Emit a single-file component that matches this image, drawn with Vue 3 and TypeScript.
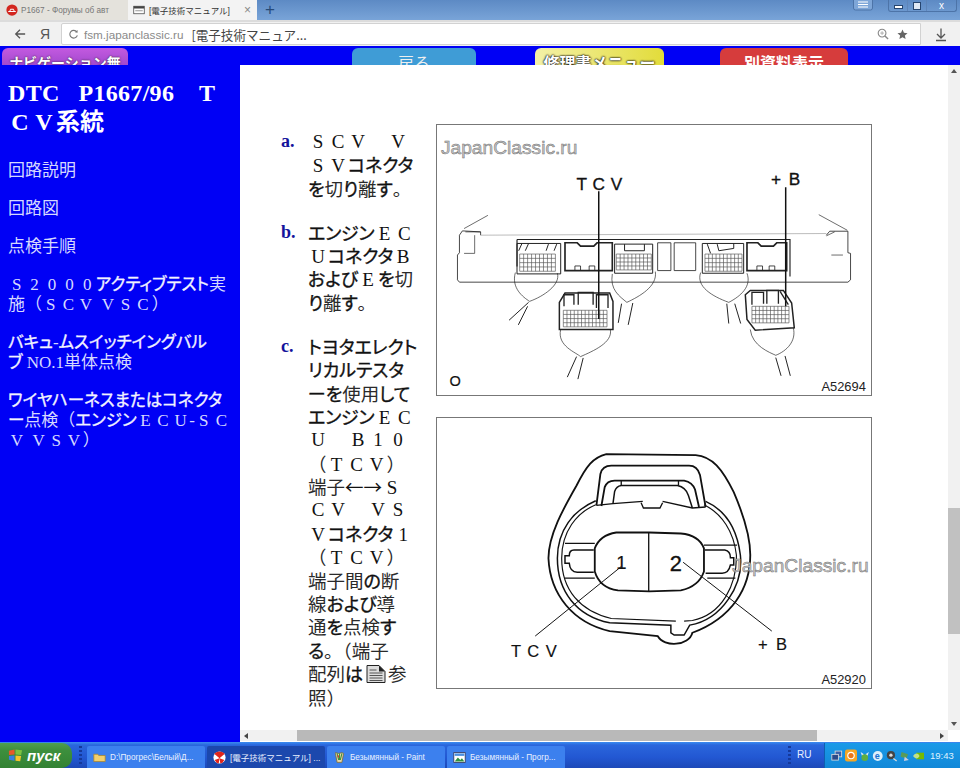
<script setup lang="ts">
// Разбивка строки на куски: полноширинная латиница рисуется засечками в ячейке, кана жирнее кандзи
type Seg = { t: string; c: string };

function segs(line: string): Seg[] {
  const out: Seg[] = [];
  for (const ch of line) {
    const code = ch.charCodeAt(0);
    if (code >= 0xff10 && code <= 0xff5a) {
      out.push({ t: String.fromCharCode(code - 0xfee0), c: "fw" });
    } else if (ch === "\u3000") {
      out.push({ t: ch, c: "fw" });
    } else {
      let c = "kanji";
      if (/[\u3040-\u30ff]/.test(ch)) c = "kana";
      else if (/[\x20-\x7e]/.test(ch)) c = "asc";
      else if (/[←→]/.test(ch)) c = "arrow";
      const last = out[out.length - 1];
      if (last && last.c === c) last.t += ch;
      else out.push({ t: ch, c });
    }
  }
  return out;
}

const title = ["DTC   P1667/96    T", "ＣＶ系統"];

const navItems: string[][] = [
  ["回路説明"],
  ["回路図"],
  ["点検手順"],
  ["Ｓ２０００アクティブテスト実", "施（ＳＣＶ ＶＳＣ）"],
  ["バキュ-ムスイッチイングバル", "ブ NO.1単体点検"],
  ["ワイヤハーネスまたはコネクタ", "ー点検（エンジンＥＣＵ-ＳＣ", "Ｖ ＶＳＶ）"],
];

const steps = [
  { mark: "a.", lines: ["ＳＣＶ　Ｖ", "ＳＶコネクタ", "を切り離す。"] },
  { mark: "b.", lines: ["エンジンＥＣ", "ＵコネクタＢ", "およびＥを切", "り離す。"] },
  {
    mark: "c.",
    lines: [
      "トヨタエレクト",
      "リカルテスタ",
      "ーを使用して",
      "エンジンＥＣ",
      "Ｕ　Ｂ１０",
      "（ＴＣＶ）",
      "端子←→Ｓ",
      "ＣＶ　ＶＳ",
      "Ｖコネクタ１",
      "（ＴＣＶ）",
      "端子間の断",
      "線および導",
      "通を点検す",
      "る。（端子",
      "配列は@参",
      "照）",
    ],
  },
];

const buttons = [
  { label: "ナビゲーション無", cls: "b-purple" },
  { label: "戻る", cls: "b-blue" },
  { label: "修理書メニュー", cls: "b-yellow" },
  { label: "別資料表示", cls: "b-red" },
];

const tasks = [
  { label: "D:\\Прогрес\\Белый\\Д...", icon: "folder", active: false },
  { label: "[電子技術マニュアル] ...", icon: "yandex", active: true },
  { label: "Безымянный - Paint", icon: "paint", active: false },
  { label: "Безымянный - Прогр...", icon: "pic", active: false },
];

// сетка контактов разъёма на схеме
function grid(x: number, y: number, w: number, h: number, cols: number, rows: number): string {
  let d = "";
  for (let i = 0; i <= cols; i++) d += `M${x + (w * i) / cols},${y}V${y + h}`;
  for (let j = 0; j <= rows; j++) d += `M${x},${y + (h * j) / rows}H${x + w}`;
  return d;
}

const grids = [
  grid(248, 402, 108, 52, 9, 4),
  grid(540, 402, 106, 48, 9, 4),
  grid(808, 402, 112, 52, 10, 4),
  grid(380, 572, 132, 50, 12, 4),
  grid(950, 560, 112, 50, 10, 4),
];
</script>

<template>
  <div class="screen">
    <header class="tabs">
      <div class="tab tab-back">
        <svg class="fav" viewBox="0 0 16 16"><circle cx="8" cy="8" r="7.5" fill="#d3261c" /><path d="M3 10h10M5 10l1-3h4l1 3" stroke="#fff" stroke-width="1.3" fill="none" /></svg>
        <span class="tab-text fade">P1667 - Форумы об авт</span>
      </div>
      <div class="tab tab-on">
        <svg class="fav" viewBox="0 0 16 16"><rect x="1" y="3" width="14" height="10" fill="#fff" stroke="#444" /><rect x="1" y="3" width="14" height="3" fill="#444" /><path d="M3 9h10" stroke="#777" /></svg>
        <span class="tab-text">[電子技術マニュアル]</span>
        <span class="tab-x">×</span>
      </div>
      <span class="plus">+</span>
      <div class="win">
        <svg class="win-menu" viewBox="0 0 20 11"><rect x=".5" y="-3" width="19" height="13" rx="2" fill="#7ea6d8" stroke="#4d74a8" /><path d="M5 2h10M5 4.5h10M5 7h10" stroke="#fff" stroke-width="1.2" /></svg>
        <div class="win-btns">
          <span class="wb"><i class="w-min"></i></span>
          <span class="wb"><i class="w-max"></i></span>
          <span class="wb wb-x">x</span>
        </div>
      </div>
    </header>

    <div class="toolbar">
      <svg class="tb-back" viewBox="0 0 14 14"><path d="M13 7H2M7 2L2 7l5 5" fill="none" stroke="#555" stroke-width="1.5" /></svg>
      <span class="ya">Я</span>
      <div class="omni">
        <svg class="reload" viewBox="0 0 12 12"><path d="M9.6 3.2A4.2 4.2 0 1 0 10.2 7" fill="none" stroke="#777" stroke-width="1.2" /><path d="M7.6 3.6L10.4 4V1.2z" fill="#777" /></svg>
        <span class="host">fsm.japanclassic.ru</span>
        <span class="omni-title">[電子技術マニュア...</span>
        <svg class="zoom-ic" viewBox="0 0 13 13"><circle cx="5.5" cy="5.5" r="4.2" fill="none" stroke="#888" stroke-width="1.2" /><path d="M8.6 8.6L12 12" stroke="#888" stroke-width="1.5" /><path d="M3.5 5.5h4M5.5 3.5v4" stroke="#aaa" /></svg>
        <svg class="star" viewBox="0 0 12 12"><path d="M6 .5l1.6 3.6 3.9.4-2.9 2.6.8 3.9L6 9l-3.4 2 .8-3.9L.5 4.5l3.9-.4z" fill="#666" /></svg>
      </div>
      <svg class="dl" viewBox="0 0 12 14"><path d="M6 1v9M2 6.5l4 4 4-4M1 13h10" fill="none" stroke="#555" stroke-width="1.3" /></svg>
    </div>

    <div class="page-head">
      <span v-for="b in buttons" :key="b.label" class="pbtn" :class="b.cls">{{ b.label }}</span>
    </div>

    <div class="page">
      <aside class="side">
        <h1 class="side-title">
          <div v-for="(l, i) in title" :key="i" class="line">
            <span v-for="(s, j) in segs(l)" :key="j" :class="s.c">{{ s.t }}</span>
          </div>
        </h1>
        <div v-for="(item, i) in navItems" :key="i" class="nav-item">
          <div v-for="(l, k) in item" :key="k" class="line">
            <span v-for="(s, j) in segs(l)" :key="j" :class="s.c">{{ s.t }}</span>
          </div>
        </div>
      </aside>

      <div class="pane">
        <main class="doc">
          <ol class="steps">
            <li v-for="st in steps" :key="st.mark" class="step">
              <span class="mark">{{ st.mark }}</span>
              <div class="step-text">
                <div v-for="(l, k) in st.lines" :key="k" class="line">
                  <template v-for="(s, j) in segs(l)" :key="j">
                    <template v-if="s.t.includes('@')">
                      <svg class="doc-ic" viewBox="0 0 20 18"><path d="M1 .5h12l6 6v11H1z" fill="#ddd" stroke="#222" /><path d="M13 .5v6h6z" fill="#222" /><path d="M3.5 5h7M3.5 8h13M3.5 10.5h13M3.5 13h13M3.5 15.5h13" stroke="#555" /></svg>
                      <span class="kanji">{{ s.t.replace("@", "") }}</span>
                    </template>
                    <span v-else :class="s.c">{{ s.t }}</span>
                  </template>
                </div>
              </div>
            </li>
          </ol>

          <div class="figures">
            <svg class="fig" viewBox="0 12 1308 816">
              <g fill="none" stroke="#222" stroke-width="2.5">
                <path d="M80,325L152,285M1152,283L1238,330" stroke-width="2" />
                <path d="M130,345L130,335L75,332L66,345V398L60,405V480L66,487H1240L1248,480V400L1240,398V333H1185L1175,345" />
                <path d="M130,345L1175,340" stroke="#999" stroke-width="2" />
                <path d="M84,335H130M1175,347L1200,335M80,400H112V345M1190,405H1225" stroke-width="2" />
                <path d="M240,358H1065V470M240,358V440" stroke-width="3.5" />
                <path d="M385,368H422L432,378H472L482,368H528V452H385Z" stroke-width="5" />
                <path d="M415,452V438H432V452M458,452V438H475V452" />
                <path d="M935,368H968L978,378H1015L1025,368H1055V452H935Z" stroke-width="5" />
                <path d="M965,452V438H982V452M1002,452V438H1019V452" />
                <path d="M665,368V452H705V368ZM715,368V452H780V368Z" stroke-width="2.5" />
                <path d="M240,370H372V462H240ZM535,372H650V460H535ZM800,370H925V460H800Z" stroke-width="3" />
                <path d="M255,370L245,392M275,370L265,392M335,372L328,392M360,372L352,392M565,372V392H625V372M815,372L825,400M845,372L850,392L895,385V370" stroke-width="3" />
                <path d="M235,458C222,505 258,532 278,545C320,530 372,495 362,460" stroke-width="2" />
                <path d="M528,462C520,510 550,530 572,548C610,530 665,500 658,455" stroke-width="2" />
                <path d="M795,458C780,500 830,530 880,548C915,530 950,500 935,460" stroke-width="2" />
                <path d="M275,548L216,602M272,560L244,616M556,552L546,610M590,550L576,616M874,552L880,612M898,552L916,612" stroke-width="3" />
                <path d="M368,548L385,520H520L530,545V630H368Z" stroke-width="4.5" />
                <path d="M382,560V525H412V555M425,555V518H470V555M480,565V525H515V565" stroke-width="4" />
                <path d="M372,630C360,680 420,700 432,712C470,695 530,670 522,630" stroke-width="2" />
                <path d="M420,712L392,774M440,716L424,780" stroke-width="3" />
                <path d="M930,525L945,512H1045L1070,550L1078,625L960,632L935,600Z" stroke-width="4.5" />
                <path d="M950,555V518H985V552M995,552V512H1030V552M1035,515L1060,555" stroke-width="4" />
                <path d="M945,630C950,680 1005,700 1022,708C1055,695 1085,665 1075,625" stroke-width="2" />
                <path d="M1022,715L1038,770M1050,710L1066,770" stroke-width="3" />
                <path v-for="(g, i) in grids" :key="i" :d="g" stroke="#555" stroke-width="2" />
              </g>
              <path d="M487,212V598M1052,200V560" stroke="#111" stroke-width="4.5" fill="none" />
              <text class="cap big" x="420" y="208" textLength="138">T C V</text>
              <text class="cap big" x="1008" y="193" textLength="88">+ B</text>
              <text class="cap letter" x="36" y="800">O</text>
              <text class="code" x="1160" y="816">A52694</text>
              <text class="mark-w" x="10" y="100">JapanClassic.ru</text>
            </svg>

            <svg class="fig" viewBox="0 6 1308 816">
              <g fill="none" stroke="#111" stroke-width="5.5">
                <path d="M510,115L780,118C830,122 860,160 895,230C925,300 945,360 945,420C945,520 890,610 770,655C760,695 685,700 665,665L520,650C410,625 340,540 335,430C335,360 380,280 420,210C450,150 470,125 510,115Z" />
                <path d="M478,256C410,285 362,345 362,430C362,530 420,605 520,625L705,632V655L715,662H745L762,632C860,615 925,510 915,420C905,340 870,285 810,258" stroke-width="4.5" />
                <path d="M478,268C420,292 375,350 375,430C375,525 430,590 525,612L720,620M745,620L770,618C860,600 905,510 903,420C895,350 860,295 805,268" stroke-width="3.5" />
                <path d="M480,270L492,175Q498,150 525,150H760Q785,150 793,178L810,275" />
                <path d="M495,272L505,215Q512,195 535,195H745Q770,200 778,222L790,275" />
                <path d="M530,265L535,228Q540,212 555,210H725Q750,215 758,240L770,278" stroke-width="4.5" />
                <path d="M480,270L530,265L620,258M680,258L770,278L810,275M555,195V210M728,195V210" stroke-width="4" />
                <path d="M615,262L622,278H672L680,262" stroke-width="4" />
                <path d="M640,352H540Q490,360 475,400V470Q490,520 545,527L640,530L735,527Q790,515 805,470V400Q790,360 735,355Z" />
                <path d="M638,352V530" stroke-width="4" />
                <path d="M385,385H475M385,490H475M805,390H905M815,490H900" stroke-width="4" />
                <path d="M472,405H412Q398,405 398,422H385V445H398Q400,472 422,472H472" stroke-width="4.5" />
                <path d="M808,405H868Q885,408 885,428H895V450H885Q880,475 860,475H810" stroke-width="4.5" />
                <path d="M555,455L295,665M742,442L1010,650" stroke-width="3" />
              </g>
              <text class="cap one" x="540" y="462">1</text>
              <text class="cap num" x="702" y="469">2</text>
              <text class="cap thin" x="222" y="727" textLength="138">T C V</text>
              <text class="cap thin" x="968" y="708" textLength="88">+ B</text>
              <text class="code" x="1160" y="810">A52920</text>
              <text class="mark-w" x="890" y="470">JapanClassic.ru</text>
            </svg>
          </div>
        </main>

        <div class="vbar">
          <span class="ar ar-up"></span>
          <div class="vtrack"><div class="vthumb"></div></div>
          <span class="ar ar-down"></span>
        </div>
        <div class="hbar">
          <span class="ar ar-left"></span>
          <div class="htrack"><div class="hthumb"></div></div>
          <span class="ar ar-right"></span>
        </div>
      </div>
    </div>

    <footer class="taskbar">
      <div class="start">
        <svg class="flag" viewBox="0 0 16 16">
          <path d="M1 3l6-1.5V7L1 7.5z" fill="#e8582a" />
          <path d="M8 1.5l7 1-1 5-6-.5z" fill="#7cc242" />
          <path d="M1 8.5L7 8v5.5l-6-1z" fill="#3a7fe0" />
          <path d="M8 8l6 .5-1 5.5-5-.5z" fill="#f5c52c" />
        </svg>
        <span>пуск</span>
      </div>
      <span class="grip"></span>
      <div class="tasks">
        <div v-for="t in tasks" :key="t.label" class="task" :class="{ active: t.active }">
          <svg v-if="t.icon === 'folder'" class="task-ic" viewBox="0 0 16 16"><path d="M1 4h5l1 1.5h8V13H1z" fill="#f2cf6c" stroke="#a98632" /></svg>
          <svg v-else-if="t.icon === 'yandex'" class="task-ic" viewBox="0 0 16 16"><circle cx="8" cy="8" r="7.5" fill="#fff" /><path d="M1.5 3.5L8 9l6.5-5.5Q8 -2 1.5 3.5zM8 9L2 11Q4 15 7 15.5zM8 9l6 2Q12 15 9 15.5z" fill="#e1251b" /></svg>
          <svg v-else-if="t.icon === 'paint'" class="task-ic" viewBox="0 0 16 16"><path d="M3 2l4 1 4-1 2 1-2 11H5L3 3z" fill="#e7d9a8" stroke="#7b6a3a" /><path d="M5 3l2 8M8 3v8M11 3l-2 8" stroke="#3a8f3a" stroke-width="1.3" /><path d="M6 5l1 3" stroke="#d33" stroke-width="1.3" /></svg>
          <svg v-else class="task-ic" viewBox="0 0 16 16"><rect x="1" y="2" width="14" height="12" fill="#fff" stroke="#335" /><path d="M2 13l4-5 3 3 2-2 3 4z" fill="#2f8f3f" /><rect x="2" y="3" width="12" height="3" fill="#4a8fe0" /></svg>
          <span class="task-text">{{ t.label }}</span>
        </div>
      </div>
      <span class="grip grip2"></span>
      <span class="lang">RU</span>
      <div class="tray">
        <svg class="tr" viewBox="0 0 14 14"><rect x="5" y="1" width="8" height="7" fill="#3a5fa8" stroke="#ddd" /><rect x="1" y="5" width="8" height="7" fill="#2b4a8a" stroke="#ddd" /></svg>
        <svg class="tr tr-big" viewBox="0 0 16 16"><rect width="16" height="16" rx="3" fill="#f5a623" /><circle cx="8" cy="8" r="5" fill="#fff" /><circle cx="8" cy="8" r="3.5" fill="#e8761a" /></svg>
        <svg class="tr" viewBox="0 0 14 14"><path d="M2 2l4 3-2 3zM12 2L8 5l2 3z" fill="#dfe9f5" /><circle cx="7" cy="9" r="4" fill="#5fae3f" /></svg>
        <svg class="tr" viewBox="0 0 14 14"><circle cx="7" cy="7" r="6" fill="#dceffb" /><text x="3.3" y="11" class="tr-e">e</text></svg>
        <svg class="tr" viewBox="0 0 14 14"><circle cx="6" cy="6" r="5" fill="#444" /><circle cx="6" cy="6" r="2" fill="#ddd" /><path d="M9 10l4 3" stroke="#ddd" stroke-width="1.5" /></svg>
        <svg class="tr" viewBox="0 0 14 14"><path d="M3 2l8 3-2 5-7-2z" fill="#5a9a5a" /><path d="M7 8l5 4-6 1z" fill="#ccd" /></svg>
        <svg class="tr" viewBox="0 0 14 14"><rect x="4" y="3" width="10" height="8" fill="#76b900" /><path d="M0 7c3-4 6-4 8 0-2 4-5 4-8 0z" fill="#bfe08a" /></svg>
        <span class="clock">19:43</span>
      </div>
    </footer>
  </div>
</template>

<style scoped>
.screen {
  width: 960px;
  height: 768px;
  display: flex;
  flex-direction: column;
  overflow: hidden;
  font-family: "Liberation Sans", "Noto Sans CJK JP", sans-serif;
}

/* вкладки */
.tabs {
  height: 20px;
  display: flex;
  align-items: stretch;
  background: linear-gradient(#5d8ac4, #79a4d8);
  flex: none;
}
.tab {
  width: 128px;
  display: flex;
  align-items: center;
  gap: 3px;
  padding-left: 6px;
  box-sizing: border-box;
  font-size: 8.2px;
  overflow: hidden;
  white-space: nowrap;
}
.tab-back {
  background: #e4e2dc;
  color: #555;
}
.tab-on {
  width: 129px;
  background: #f3f3f3;
  color: #333;
  padding-left: 5px;
  gap: 4px;
  font-size: 8.5px;
}
.fav {
  width: 12px;
  height: 12px;
  flex: none;
}
.fade {
  color: #777;
}
.tab-x {
  margin-left: 10px;
  color: #888;
  font-size: 12px;
}
.plus {
  margin-left: 5px;
  width: 16px;
  text-align: center;
  font-size: 17px;
  line-height: 19px;
  color: #264a78;
}
.win {
  margin-left: auto;
  display: flex;
  align-items: flex-start;
  gap: 15px;
  padding-right: 3px;
}
.win-menu {
  width: 20px;
  height: 11px;
}
.win-btns {
  display: flex;
  width: 69px;
  height: 12px;
  border: 1px solid #4d74a8;
  border-top: none;
  border-radius: 0 0 3px 3px;
  box-sizing: border-box;
}
.wb {
  flex: 1;
  display: flex;
  justify-content: center;
  align-items: center;
  color: #fff;
  font-size: 10px;
  line-height: 10px;
  border-right: 1px solid #5f86ba;
}
.wb-x {
  flex: 1.6;
  border-right: none;
}
.w-min {
  width: 7px;
  height: 2px;
  margin-top: 3px;
  border: 1px solid #26456f;
  background: #fff;
}
.w-max {
  width: 6px;
  height: 6px;
  border: 1px solid #26456f;
  background: #dfe8f4;
}

/* адресная строка */
.toolbar {
  height: 26px;
  background: #f1f1f1;
  border-top: 2px solid #dcdcdc;
  box-sizing: border-box;
  display: flex;
  align-items: center;
  flex: none;
}
.tb-back {
  width: 12px;
  height: 12px;
  margin-left: 14px;
}
.ya {
  margin-left: 14px;
  width: 22px;
  font-size: 14px;
  color: #555;
}
.omni {
  width: 860px;
  height: 22px;
  background: #fff;
  border: 1px solid #d2d2d2;
  border-radius: 2px 0 0 2px;
  box-sizing: border-box;
  display: flex;
  align-items: center;
  padding: 0 12px 0 6px;
  margin-left: -1px;
}
.reload {
  width: 11px;
  height: 11px;
  margin-right: 5px;
}
.host {
  font-size: 11.7px;
  color: #8a8a8a;
}
.omni-title {
  margin-left: 8px;
  font-size: 12.6px;
  color: #444;
  font-family: "Noto Sans CJK JP", sans-serif;
}
.zoom-ic {
  margin-left: auto;
  width: 12px;
  height: 12px;
}
.star {
  margin-left: 8px;
  width: 11px;
  height: 11px;
}
.dl {
  margin-left: 14px;
  width: 12px;
  height: 15px;
}

/* кнопки страницы, обрезанные снизу */
.page-head {
  height: 19px;
  background: #0000f5;
  position: relative;
  overflow: hidden;
  flex: none;
}
.pbtn {
  position: absolute;
  top: 2px;
  height: 30px;
  border-radius: 6px;
  text-align: center;
  font-family: "Noto Sans CJK JP", sans-serif;
  font-weight: 700;
  font-size: 16px;
  line-height: 28px;
  color: #fff;
}
.b-purple {
  left: 2px;
  width: 126px;
  font-size: 14px;
  background: linear-gradient(#c35ae0, #8b3cc0);
  text-shadow: 0 0 2px #222;
}
.b-blue {
  left: 352px;
  width: 124px;
  background: #3f9cd6;
  color: #eee;
  font-weight: 400;
}
.b-yellow {
  left: 535px;
  width: 129px;
  background: linear-gradient(90deg, #f4f1a8, #e2dc3a);
  text-shadow: 0 0 2px #000, 0 0 2px #000;
}
.b-red {
  left: 720px;
  width: 128px;
  background: #d63c3c;
}

.page {
  flex: 1;
  display: flex;
  min-height: 0;
}

/* левое меню */
.side {
  width: 240px;
  background: #0000f5;
  color: #f2f2ff;
  padding: 14px 8px 0;
  box-sizing: border-box;
  flex: none;
  font-size: 17px;
  --lh: 20px;
  --cell: 17.6px;
}
.side-title {
  margin: 0 0 25px;
  font-size: 24px;
  font-weight: 700;
  --lh: 28px;
  --cell: 24px;
  color: #fff;
}
.side-title .line + .line {
  margin-top: -1px;
}
.side-title .asc {
  letter-spacing: 0.3px;
}
.nav-item {
  margin-bottom: 18px;
}
.line {
  height: var(--lh);
  line-height: var(--lh);
  white-space: pre;
}
.fw {
  display: inline-block;
  width: var(--cell);
  text-align: center;
  font-family: "Liberation Serif", "Noto Sans CJK JP", serif;
}
.asc {
  font-family: "Liberation Serif", serif;
}
.arrow,
.kanji {
  font-family: "Noto Sans CJK JP", sans-serif;
}
.kana {
  font-family: "Noto Sans CJK JP", sans-serif;
  font-feature-settings: "palt";
  -webkit-text-stroke: 0.35px currentColor;
}
.nav-item .kana {
  font-size: 16.5px;
}
.nav-item .kanji,
.nav-item .fw,
.nav-item .asc {
  color: #d5d8ff;
}

/* контент */
.pane {
  flex: 1;
  display: grid;
  grid-template-columns: 1fr 12px;
  grid-template-rows: 1fr 12px;
  background: #fff;
  min-width: 0;
}
.doc {
  display: flex;
  padding: 59px 0 0 41px;
  overflow: hidden;
  min-height: 0;
}
.steps {
  list-style: none;
  margin: 0;
  padding: 6px 0 0;
  width: 155px;
  flex: none;
  color: #111;
  font-size: 18.5px;
  --lh: 23.4px;
  --cell: 20px;
}
.step {
  display: flex;
  margin-bottom: 20.5px;
}
.mark {
  width: 27px;
  flex: none;
  font-family: "Liberation Serif", serif;
  font-weight: 700;
  font-size: 18px;
  line-height: var(--lh);
  color: #14149c;
}
.step-text {
  flex: 1;
}
.step .fw {
  font-size: 19px;
}
.step .kana {
  font-size: 18px;
  letter-spacing: -0.1px;
}
.step .kanji {
  color: #2a2a2a;
}
.doc-ic {
  width: 20px;
  height: 18px;
  margin: 0 2px 0 3px;
  vertical-align: -2px;
}
.figures {
  display: flex;
  flex-direction: column;
  gap: 21px;
}
.fig {
  width: 436px;
  height: 272px;
  border: 1px solid #777;
  box-sizing: border-box;
  display: block;
}
.cap {
  font-family: "Liberation Sans", sans-serif;
  font-size: 50px;
  fill: #111;
  stroke: #111;
  stroke-width: 1;
}
.cap.big {
  font-size: 52px;
}
.cap.letter {
  font-size: 44px;
  stroke-width: 0.5;
}
.cap.one {
  font-size: 56px;
  stroke-width: 0.5;
}
.cap.num {
  font-size: 66px;
  stroke-width: 1;
}
.cap.thin {
  stroke-width: 0.5;
}
.code {
  font-family: "Liberation Sans", sans-serif;
  font-size: 39px;
  fill: #222;
}
.mark-w {
  font-family: "Liberation Sans", sans-serif;
  font-size: 58px;
  fill: #c8c8c8;
  stroke: #6f6f6f;
  stroke-width: 1.5;
}

/* полосы прокрутки */
.vbar {
  grid-row: 1 / 3;
  grid-column: 2;
  background: #f1f1f1;
  display: flex;
  flex-direction: column;
  align-items: center;
  height: 665px;
}
.vtrack {
  flex: 1;
  width: 100%;
  padding-top: 431px;
  box-sizing: border-box;
}
.vthumb {
  height: 126px;
  background: #c1c1c1;
}
.hbar {
  grid-row: 2;
  grid-column: 1;
  background: #f1f1f1;
  display: flex;
  align-items: center;
  margin-bottom: 1px;
}
.htrack {
  flex: 1;
  height: 100%;
  padding-left: 45px;
  box-sizing: border-box;
}
.hthumb {
  width: 520px;
  height: 100%;
  background: #b9b9b9;
}
.ar {
  width: 0;
  height: 0;
  flex: none;
  margin: 4px;
  border: 3px solid transparent;
}
.ar-up {
  border-top: none;
  border-bottom: 4px solid #555;
}
.ar-down {
  border-bottom: none;
  border-top: 4px solid #555;
}
.ar-left {
  border-left: none;
  border-right: 4px solid #444;
}
.ar-right {
  border-right: none;
  border-left: 4px solid #444;
}

/* панель задач */
.taskbar {
  height: 26px;
  flex: none;
  display: flex;
  align-items: stretch;
  background: linear-gradient(#3a8cf0 0, #2a66dc 3px, #2257d2 60%, #1d49b8 100%);
  color: #e9f0ff;
}
.start {
  width: 72px;
  margin-top: 1px;
  border-radius: 0 10px 10px 0;
  background: linear-gradient(#4f9e4f, #3d8f3d 30%, #338233);
  display: flex;
  align-items: center;
  gap: 4px;
  padding-left: 8px;
  box-sizing: border-box;
  font-size: 15px;
  font-style: italic;
  font-weight: 700;
  color: #fff;
  flex: none;
}
.flag {
  width: 15px;
  height: 15px;
}
.grip {
  width: 3px;
  margin: 4px 0 2px 7px;
  background: repeating-linear-gradient(#15399a 0 2px, transparent 2px 4px);
  flex: none;
}
.tasks {
  display: flex;
  gap: 2px;
  margin-left: 5px;
  padding-top: 4px;
}
.task {
  width: 118px;
  background: #3c80ee;
  border-radius: 2px 2px 0 0;
  display: flex;
  align-items: center;
  gap: 4px;
  padding-left: 6px;
  box-sizing: border-box;
  font-size: 8.2px;
  white-space: nowrap;
  overflow: hidden;
}
.task.active {
  background: #1c48ad;
  font-size: 8.5px;
}
.task-ic {
  width: 13px;
  height: 13px;
  flex: none;
}
.grip2 {
  margin-left: auto;
  margin-right: 6px;
}
.lang {
  width: 27px;
  font-size: 10px;
  line-height: 26px;
}
.tray {
  width: 136px;
  margin-top: 1px;
  background: linear-gradient(#1a9ae8, #1288d8);
  border-left: 1px solid #0f5fb0;
  display: flex;
  align-items: center;
  gap: 2px;
  padding-left: 6px;
  box-sizing: border-box;
  flex: none;
}
.tr {
  width: 11.5px;
  height: 12px;
  flex: none;
}
.tr-big {
  width: 12px;
  height: 13px;
}
.tr-e {
  font-family: "Liberation Sans", sans-serif;
  font-size: 11px;
  font-weight: 700;
  fill: #1a6fd0;
}
.clock {
  margin-left: 4px;
  font-size: 9.5px;
  color: #dff2ff;
}
</style>

<style>
html,
body {
  margin: 0;
  background: #fff;
}
</style>
